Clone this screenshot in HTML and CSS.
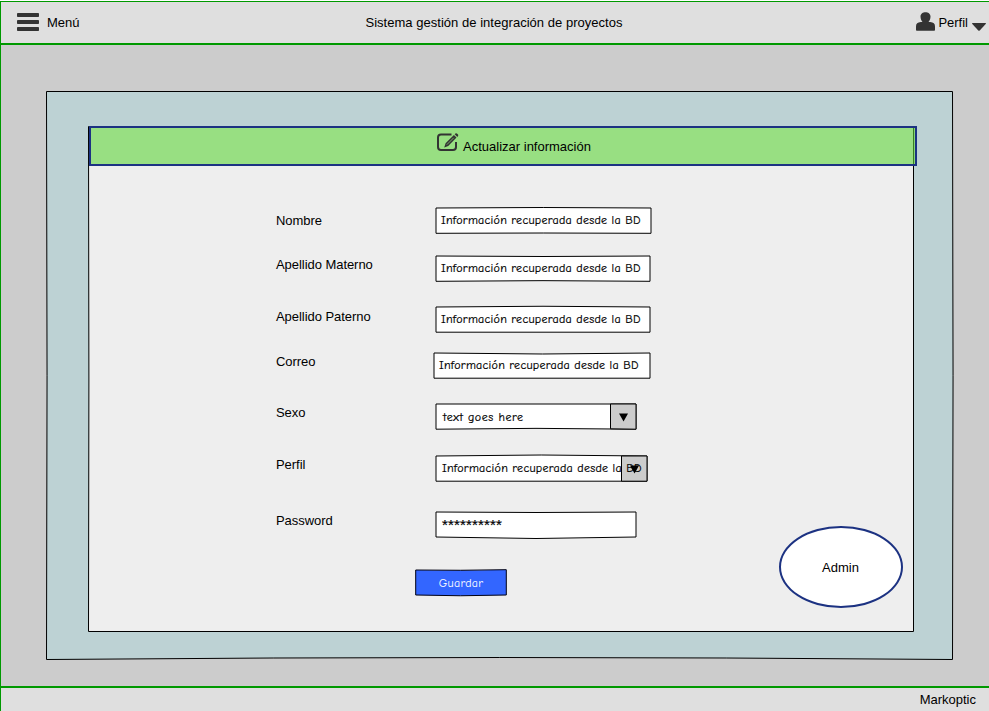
FILE: index.html
```html
<!DOCTYPE html>
<html lang="es">
<head>
<meta charset="utf-8">
<title>Sistema gestión de integración de proyectos</title>
<link rel="stylesheet" href="styles.css">
</head>
<body>
<div class="app">
  <header class="topbar">
    <div class="menu">
      <svg class="menu-icon" viewBox="0 0 22 18"><g fill="#333"><rect width="22" height="4" rx=".8"/><rect y="7" width="22" height="4" rx=".8"/><rect y="14" width="22" height="4" rx=".8"/></g></svg>
      <span>Menú</span>
    </div>
    <h1 class="title">Sistema gestión de integración de proyectos</h1>
    <div class="profile">
      <svg class="user-icon" viewBox="0 0 19 19"><g fill="#333"><path d="M4.500 4.500C4.500-1.200 14.500-1.200 14.500 4.500C14.500 7 13.500 9 12.500 10H14.200C17.500 10.300 19 11.500 19 14.500V18Q19 18.800 18.200 18.800H.8Q0 18.800 0 18V14.500C0 11.500 1.500 10.300 4.800 10H6.500C5.500 9 4.500 7 4.500 4.500Z"/></g></svg>
      <span>Perfil</span>
      <svg class="caret-icon" viewBox="0 0 14 8"><path fill="#333" d="M.4 0H13.600Q14.300.300 13.700 1L7.700 7.500Q7 8.200 6.300 7.500L.3 1Q-.3.300.4 0Z"/></svg>
    </div>
  </header>
  <main class="stage">
    <section class="panel">
      <svg class="outline" viewBox="0 0 907 569"><path fill="#bdd2d4" stroke="#000" d="M.5.500H906.500Q907.600 285 906.500 568.500Q454 564.500 .5 568.500Q1.600 285 .5.500Z"/></svg>
      <div class="card">
        <svg class="outline" viewBox="0 0 826 506"><path fill="#eee" stroke="#000" d="M.5.500H825.500V505.500H.5Q1.300 253 .5.500Z"/></svg>
        <div class="card-head">
          <svg class="edit-icon" viewBox="0 0 22 19"><path fill="none" stroke="#333" stroke-width="2" d="M14.500 1.500H4Q1 1.500 1 4.500V14Q1 17 4 17H16Q19 17 19 14V9"/><path fill="#333" d="M7.200 14.600L8.600 10.300 16.900 2 19.500 4.600 11.200 12.900ZM17.700 1.300L18.400.6Q19.300-.1 20.200.7L21 1.500Q21.700 2.400 20.900 3.200L20.300 3.900Z"/><path stroke="#98df82" stroke-width=".7" d="M9.800 11.700L16.700 4.800"/></svg>
          <h2>Actualizar información</h2>
        </div>
        <form class="form">
          <div class="row nombre"><label>Nombre</label>
            <div class="field"><svg class="outline" viewBox="0 0 217 27"><path class="box" d="M1 1Q108 0 216 1V26.300Q108 25.700 1 26.300Z"/></svg><span>Información recuperada desde la BD</span></div></div>
          <div class="row materno"><label>Apellido Materno</label>
            <div class="field"><svg class="outline" viewBox="0 0 217 27"><path class="box" d="M1 1Q108 2 215 1V26.300Q108 25 1 26.300Z"/></svg><span>Información recuperada desde la BD</span></div></div>
          <div class="row paterno"><label>Apellido Paterno</label>
            <div class="field"><svg class="outline" viewBox="0 0 217 27"><path class="box" d="M1 1Q108-.5 215 1V26.200H1Z"/></svg><span>Información recuperada desde la BD</span></div></div>
          <div class="row correo"><label>Correo</label>
            <div class="field"><svg class="outline" viewBox="0 0 219 27"><path class="box" d="M1 1Q110 3 217 1V26.200H1Z"/></svg><span>Información recuperada desde la BD</span></div></div>
          <div class="row sexo"><label>Sexo</label>
            <div class="field select"><svg class="outline" viewBox="0 0 202 27"><path class="box" d="M1 1H201V26.200Q101 24.500 1 26.200Z"/><path class="drop" d="M175.500 1H201V26.200L175.500 25.800Z"/><path d="M184 10.500H193L188.500 18.500Z"/></svg><span>text goes here</span></div></div>
          <div class="row perfil"><label>Perfil</label>
            <div class="field select"><svg class="outline" viewBox="0 0 213 27"><path class="box" d="M1 1Q106-1 212 1V26.200H1Z"/><path class="drop" d="M186.500 1H212V26.200H186.500Z"/><path d="M195 10.500H204L199.500 18.500Z"/></svg><span>Información recuperada desde la BD</span></div></div>
          <div class="row password"><label>Password</label>
            <div class="field"><svg class="outline" viewBox="0 0 202 28"><path class="box" d="M1 1Q101 2 201 1V26Q101 29 1 26Z"/></svg><span>**********</span></div></div>
          <button class="save" type="button"><svg class="outline" viewBox="0 0 92 27"><path fill="#3366ff" stroke="#001" d="M.7 1Q45 1.700 91.300 .7V26Q45 27.500 .7 26Z"/></svg><span>Guardar</span></button>
        </form>
        <div class="badge">Admin</div>
      </div>
    </section>
  </main>
  <footer class="footer">Markoptic</footer>
</div>
</body>
</html>
```
FILE: styles.css
```css
* { box-sizing: border-box; }
body {
  margin: 0;
  background: #fff;
  color: #000;
  font: 13px/16px "Liberation Sans", Arial, sans-serif;
}
svg { display: block; flex: none; overflow: visible; }
h1, h2 { margin: 0; font: inherit; }
.app {
  display: flex;
  flex-direction: column;
  height: 711px;
  padding-top: 1px;
  overflow: hidden;
}
.topbar {
  display: grid;
  grid-template-columns: 1fr auto 1fr;
  align-items: center;
  height: 44px;
  padding: 0 3px 0 16px;
  background: #dfdfdf;
  border: solid #090;
  border-width: 1px 0 2px 1px;
}
.menu, .profile { display: flex; align-items: center; }
.menu { gap: 8px; }
.menu-icon { width: 22px; height: 18px; margin-bottom: 1px; }
.title { padding-right: 15px; letter-spacing: .03px; white-space: nowrap; }
.profile { justify-content: flex-end; gap: 4px; }
.user-icon { width: 19px; height: 19px; margin: 0 -1px 2px 0; }
.caret-icon { width: 14px; height: 8px; margin-top: 8px; }
.stage {
  flex: 1;
  padding: 46px 0 0 45px;
  background: #ccc;
  border-left: 1px solid #090;
}
.panel {
  position: relative;
  width: 907px;
  height: 569px;
  padding: 35px 0 0 42px;
}
.outline {
  position: absolute;
  inset: 0;
  width: 100%;
  height: 100%;
}
.card { position: relative; width: 826px; height: 506px; }
.card-head {
  position: relative;
  display: flex;
  justify-content: center;
  gap: 4px;
  width: 828px;
  height: 40px;
  margin-left: 1px;
  padding: 5px 0 0 22px;
  background: rgba(95, 213, 58, .6);
  background-clip: padding-box;
  border: 2px solid #1c3282;
}
.edit-icon { width: 22px; height: 19px; }
.card-head h2 { padding-top: 6px; }
.form {
  position: relative;
  padding: 41px 0 0 188px;
}
.row {
  display: grid;
  grid-template-columns: 159px auto;
  justify-content: start;
  align-items: center;
  height: 27px;
}
.row label { padding-bottom: 8px; letter-spacing: -.05px; }
.nombre label { padding-bottom: 0; }
.paterno label { padding-bottom: 6px; }
.password label { padding-bottom: 8px; }
.materno { margin-top: 21px; }
.paterno { margin-top: 24px; }
.correo { margin-top: 19px; grid-template-columns: 157px auto; }
.sexo { margin-top: 24px; }
.perfil { margin-top: 25px; }
.password { margin-top: 29px; height: 28px; }
.field, .save {
  position: relative;
  font: 12px/16px "Comic Neue", "Comic Sans MS", "Noto Sans", sans-serif;
  letter-spacing: .26px;
}
.field {
  width: 217px;
  height: 27px;
  padding: 5px 0 0 6px;
  white-space: nowrap;
  -webkit-text-stroke: .2px #000;
}
.field span, .save span { position: relative; }
.correo .field { width: 219px; }
.sexo .field { width: 202px; letter-spacing: .55px; }
.perfil .field { width: 213px; }
.password .field {
  width: 202px;
  height: 28px;
  padding: 6px 0 0 7px;
  font: 15px/16px "Liberation Sans", Arial, sans-serif;
  letter-spacing: .17px;
}
.select { padding-left: 7px; }
.sexo .select { padding: 6px 0 0 8px; }
.box { fill: #fff; stroke: #000; stroke-width: 1; }
.drop { fill: #ccc; stroke: #000; stroke-width: 1; }
.save {
  display: block;
  width: 92px;
  height: 27px;
  margin: 30px 0 0 139px;
  padding: 0;
  border: 0;
  background: none;
  color: #fff;
}
.badge {
  position: absolute;
  left: 691px;
  top: 400px;
  display: grid;
  place-items: center;
  width: 124px;
  height: 82px;
  padding: 2px 1px 0 0;
  background: #fff;
  border: 2px solid #1c3282;
  border-radius: 50%;
}
.footer {
  height: 25px;
  padding: 4px 13px 0 0;
  text-align: right;
  background: #dfdfdf;
  border: solid #090;
  border-width: 2px 0 0 1px;
}
```
